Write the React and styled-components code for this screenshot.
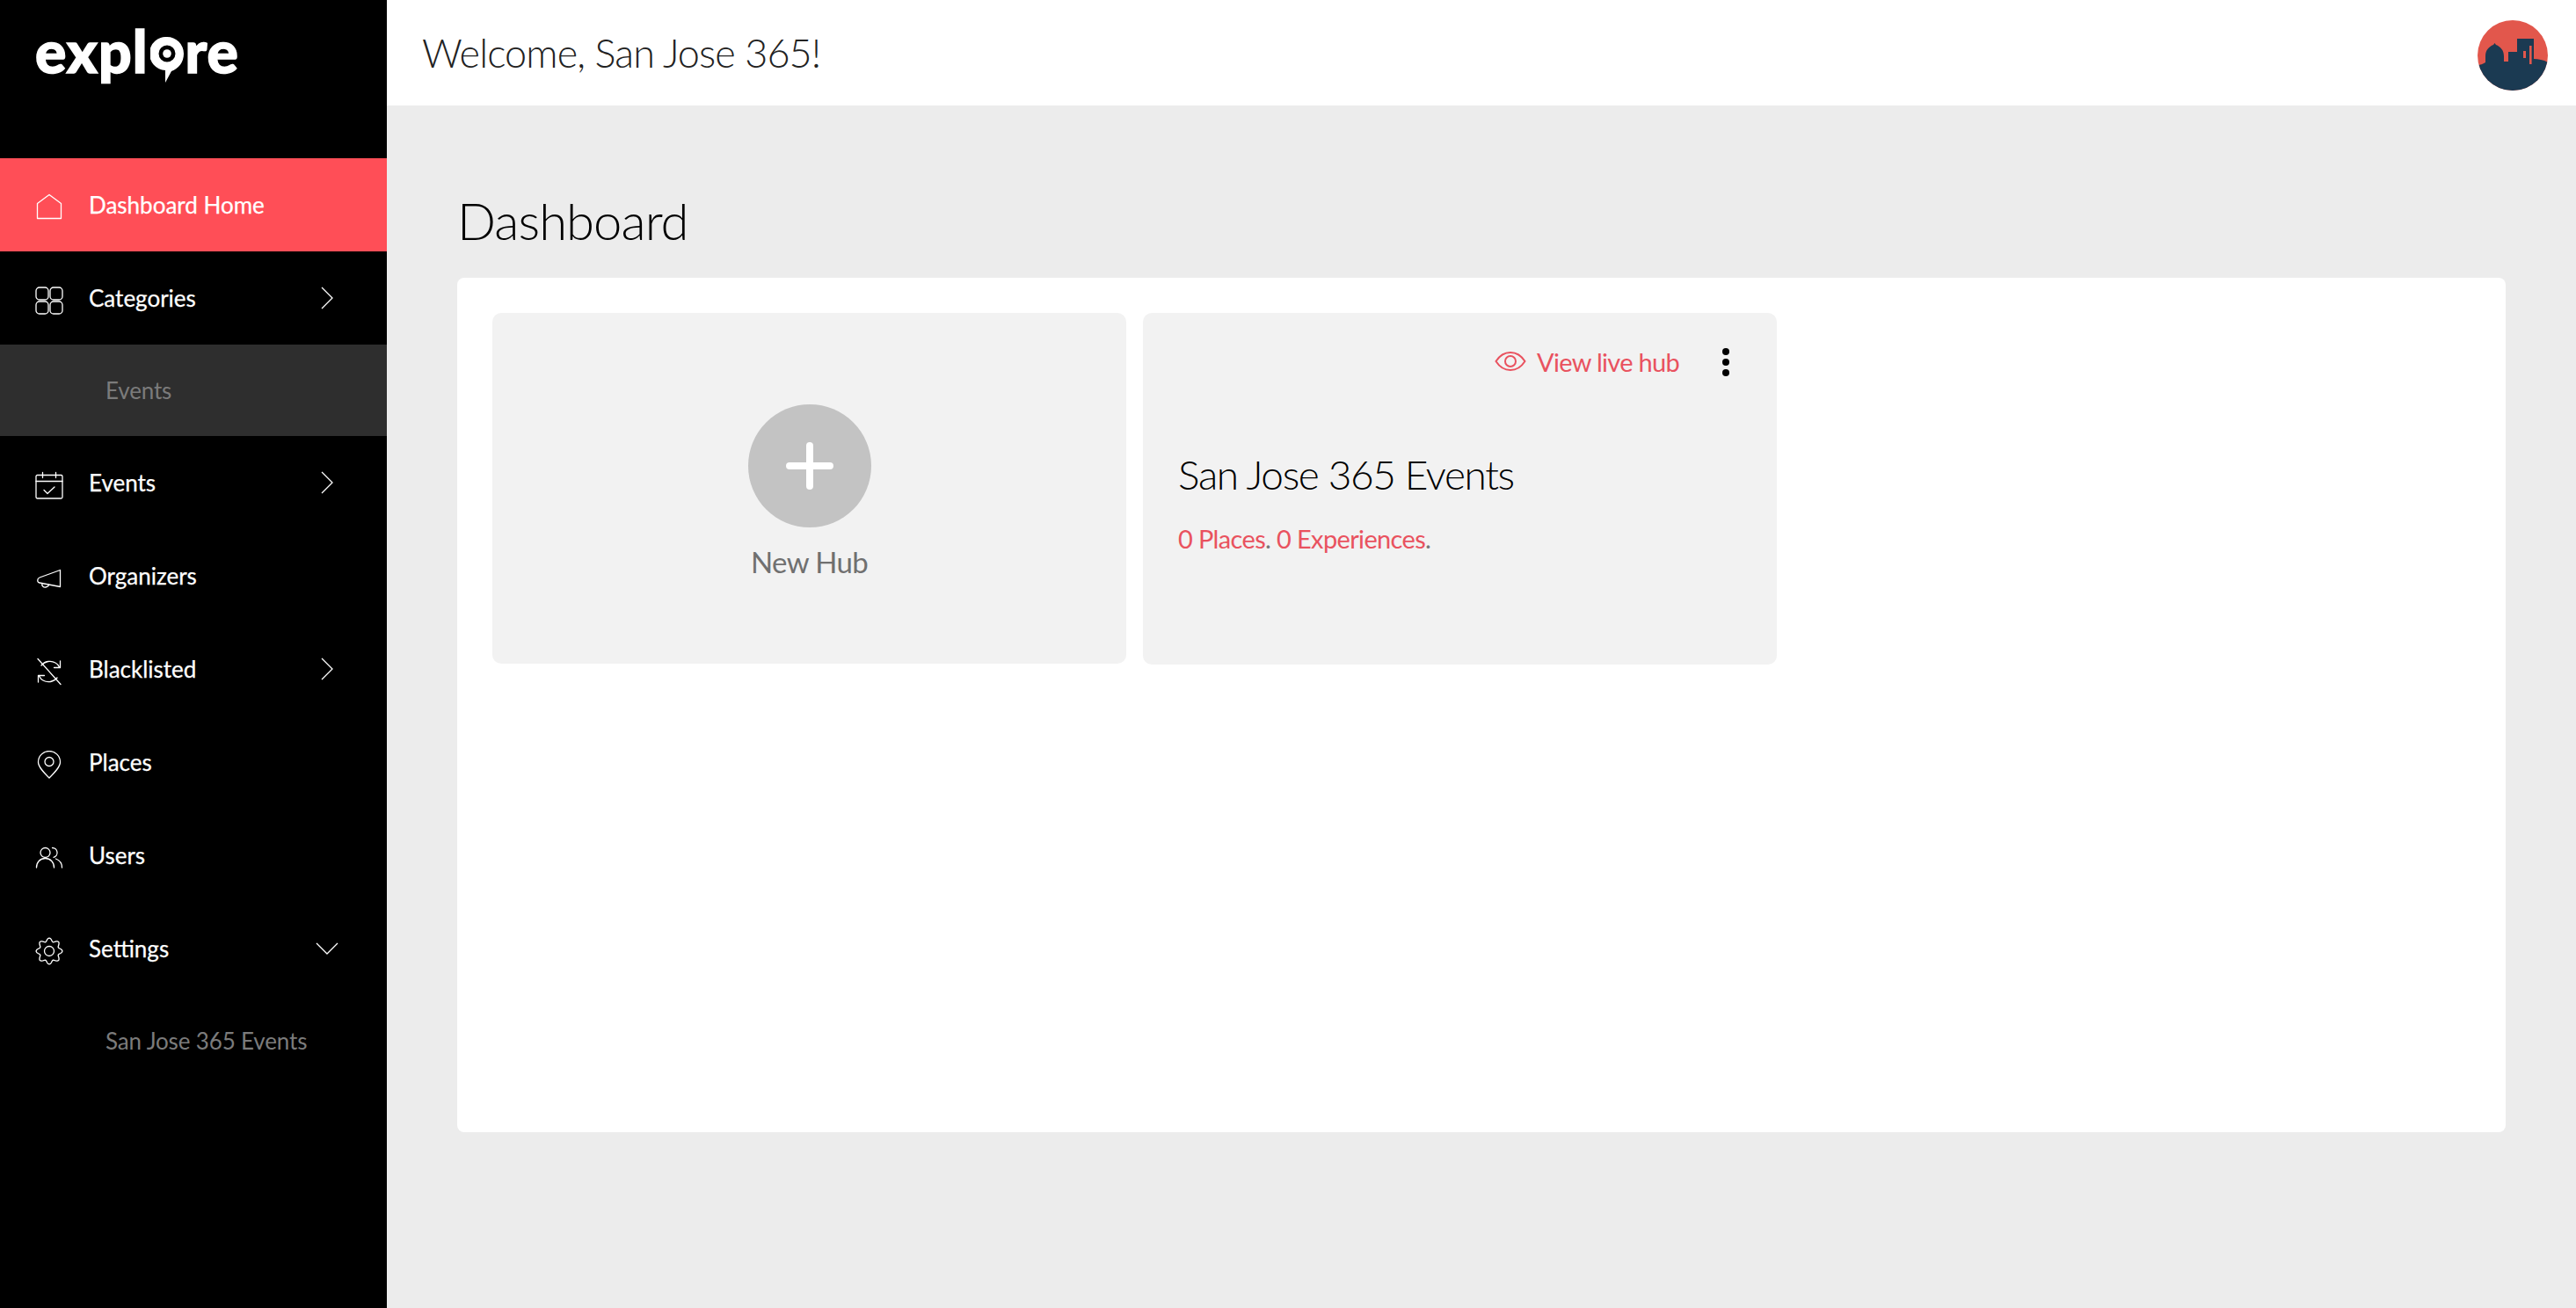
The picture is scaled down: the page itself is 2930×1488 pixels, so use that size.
import React from "react";
import styled, { createGlobalStyle } from "styled-components";

const Global = createGlobalStyle`
  html, body { margin: 0; padding: 0; height: 100%; }
  body { font-family: Lato, "Liberation Sans", sans-serif; background: #ececec; overflow: hidden; }
  #root { height: 100%; }
  * { box-sizing: border-box; }
`;

const Shell = styled.div`display: flex; height: 1488px; width: 2930px;`;
const Sidebar = styled.aside`width: 440px; flex: none; background: #000; display: flex; flex-direction: column;`;
const LogoBar = styled.div`height: 180px; padding: 19px 0 0 40px; flex: none;`;
const Logo = styled.div`
  display: flex; align-items: baseline; color: #fff; font-family: Lato, sans-serif; font-weight: 900;
  font-size: 66px; line-height: 78px; letter-spacing: 1px;
  -webkit-text-stroke: 1.5px #fff;
`;
const LogoPin = styled.svg`width: 38px; height: 52px; margin: 23px 1px 0 3px; align-self: flex-start; flex: none;`;
const Row = styled.div`
  height: 106px; flex: none; display: flex; align-items: center; padding: 0 0 0 40px;
  background: ${p => (p.$active ? "#ff4e57" : "transparent")}; color: #fff;
  font-size: 26px; -webkit-text-stroke: 0.25px #fff;
`;
const RowIcon = styled.svg`width: 32px; height: 32px; flex: none; margin-right: 29px; fill: none; stroke: #fff; stroke-width: 1.3; stroke-linecap: round; stroke-linejoin: round; position: relative; top: 3px;`;
const RowLabel = styled.span`flex: 1;`;
const Chevron = styled.svg`width: 28px; height: 28px; flex: none; margin-right: 54px; fill: none; stroke: #fff; stroke-width: 1.3;`;
const SubRow = styled.div`
  height: 104px; flex: none; display: flex; align-items: center; padding-left: 120px;
  background: ${p => (p.$shade ? "#2e2e2e" : "transparent")}; color: #7b7b7b; font-size: 26px; letter-spacing: -0.15px;
`;

const Main = styled.main`flex: 1; display: flex; flex-direction: column; min-width: 0;`;
const TopBar = styled.header`
  height: 120px; flex: none; background: #fff; display: flex; align-items: center; justify-content: space-between;
  padding: 0 32px 0 40px;
`;
const Welcome = styled.h2`margin: 0; font-weight: 300; font-size: 45px; letter-spacing: -0.9px; color: #222;`;
const Avatar = styled.svg`width: 80px; height: 80px; display: block; position: relative; top: 3px;`;
const Content = styled.div`flex: 1; padding: 0 80px; display: flex; flex-direction: column;`;
const PageTitle = styled.h1`margin: 0; height: 196px; padding-top: 93px; font-weight: 300; font-size: 58px; line-height: 76px; letter-spacing: -0.95px; color: #000;`;
const Panel = styled.section`height: 972px; width: 2330px; background: #fff; border-radius: 8px; padding: 40px; display: flex; gap: 19px; align-items: flex-start;`;
const Card = styled.div`width: 721px; height: ${p => p.$h}px; background: #f2f2f2; border-radius: 10px; flex: none;`;
const NewCard = styled(Card)`display: flex; flex-direction: column; align-items: center; padding-top: 104px;`;
const AddCircle = styled.div`width: 140px; height: 140px; border-radius: 50%; background: #c3c3c3; display: flex; align-items: center; justify-content: center;`;
const PlusIcon = styled.svg`width: 54px; height: 54px; stroke: #fff; stroke-width: 8; stroke-linecap: round;`;
const NewLabel = styled.div`margin-top: 17px; font-size: 33px; line-height: 44px; letter-spacing: -0.6px; color: #707070;`;
const HubCard = styled(Card)`padding: 0 40px; display: flex; flex-direction: column;`;
const HubTop = styled.div`height: 112px; flex: none; display: flex; align-items: center; justify-content: flex-end;`;
const LiveLink = styled.div`display: flex; align-items: center; gap: 12px; color: #e9525f; font-size: 29px; letter-spacing: -0.7px; position: relative; top: -1px;`;
const EyeIcon = styled.svg`width: 36px; height: 24px; fill: none; stroke: #e9525f; stroke-width: 2;`;
const Dots = styled.svg`width: 12px; height: 32px; margin: 0 12px 0 47px; fill: #000;`;
const HubTitle = styled.h3`margin: 44px 0 0; font-weight: 300; font-size: 46px; line-height: 56px; letter-spacing: -1.35px; color: #000;`;
const HubMeta = styled.div`margin-top: 27px; font-size: 29px; line-height: 36px; letter-spacing: -0.65px; color: #e9525f;`;
const Dot = styled.span`color: #777;`;

const gearPoints = Array.from({ length: 128 }, (_, i) => {
  const t = (i / 128) * Math.PI * 2;
  const r = 13 + 1.9 * Math.cos(8 * t);
  return `${(16 + r * Math.sin(t)).toFixed(2)},${(16 - r * Math.cos(t)).toFixed(2)}`;
}).join(" ");

const I = {
  home: <path d="M2.500 28.500V11.500L16 1.500l13.500 10v17z" />,
  grid: <g><rect x="1" y="1" width="14" height="14" rx="3.800" /><rect x="17" y="1" width="14" height="14" rx="3.800" /><rect x="1" y="17" width="14" height="14" rx="3.800" /><rect x="17" y="17" width="14" height="14" rx="3.800" /></g>,
  cal: <g><rect x="1" y="4.500" width="30" height="26.500" rx="1.500" /><path d="M1 11.500h30M8.500 1.500v6M23.500 1.500v6M10 21.500l4 4 8-7.500" /></g>,
  mega: <g><path d="M28.500 6.500v19L5 21c-3-.5-3-5 0-6z" /><path d="M8 21.500c-1 3 1.500 5 4 4.500s3.500-2 3.500-3" /></g>,
  black: <g><path d="M3 1.500l26 29" /><path d="M7 9c4-5 11-6 16-3 2 1 3.500 3 4.500 5M28.500 4v7.500h-7M25 23c-4 5-11 6-16 3-2-1-3.500-3-4.500-5M3.500 28v-7.500h7" /></g>,
  pin: <g><path d="M16 31C10 25 3.500 18.500 3.500 13a12.500 12.500 0 0 1 25 0C28.500 18.500 22 25 16 31z" /><circle cx="16" cy="12.500" r="5" /></g>,
  users: <g><circle cx="11.500" cy="10" r="5.500" /><path d="M1.500 27c0-6 4-10.500 10-10.500S21.500 21 21.500 27" /><path d="M19.500 4.500a5.500 5.500 0 0 1 1.500 10.800M23.500 17c4 1.500 7 5 7 10" /></g>,
  gear: <g><circle cx="16" cy="16" r="5.500" /><polygon points={gearPoints} /></g>,
};

const Right = () => <Chevron viewBox="0 0 28 28"><path d="M8 2l12 12L8 26" /></Chevron>;
const Down = () => <Chevron viewBox="0 0 28 28"><path d="M2 8l12 12L26 8" /></Chevron>;

const NavRow = ({ icon, label, active, chevron }) => (
  <Row $active={active}>
    <RowIcon viewBox="0 0 32 32">{icon}</RowIcon>
    <RowLabel>{label}</RowLabel>
    {chevron}
  </Row>
);

export default function App() {
  return (
    <Shell>
      <Global />
      <Sidebar>
        <LogoBar>
          <Logo>
            <span>expl</span>
            <LogoPin viewBox="0 0 38 52">
              <path fillRule="evenodd" fill="#fff" d="M19 0a19 19 0 0 1 19 19c0 10-6 17-14 20L17 52V38A19 19 0 0 1 19 0zm0 9.500a9.500 9.500 0 1 0 0 19 9.500 9.500 0 0 0 0-19z" />
              <circle cx="19" cy="19" r="4.800" fill="#fff" />
            </LogoPin>
            <span>re</span>
          </Logo>
        </LogoBar>
        <NavRow icon={I.home} label="Dashboard Home" active />
        <NavRow icon={I.grid} label="Categories" chevron={<Right />} />
        <SubRow $shade>Events</SubRow>
        <NavRow icon={I.cal} label="Events" chevron={<Right />} />
        <NavRow icon={I.mega} label="Organizers" />
        <NavRow icon={I.black} label="Blacklisted" chevron={<Right />} />
        <NavRow icon={I.pin} label="Places" />
        <NavRow icon={I.users} label="Users" />
        <NavRow icon={I.gear} label="Settings" chevron={<Down />} />
        <SubRow>San Jose 365 Events</SubRow>
      </Sidebar>
      <Main>
        <TopBar>
          <Welcome>Welcome, San Jose 365!</Welcome>
          <Avatar viewBox="0 0 80 80">
            <defs><clipPath id="av"><circle cx="40" cy="40" r="40" /></clipPath></defs>
            <g clipPath="url(#av)">
              <rect width="80" height="80" fill="#e2574c" />
              <path fill="#1b3a52" d="M0 51c3 0 6-1 9-3v-7c0-7 4-11 9-13l1.500-2 1.500 2c5 2 9 6 9 13v6h5V36h10V21h19v23c5 0 11 1 16 4v32H0z" />
              <rect x="52" y="35" width="3" height="8" fill="#e2574c" />
              <rect x="59" y="29" width="2.600" height="21" fill="#e2574c" />
            </g>
          </Avatar>
        </TopBar>
        <Content>
          <PageTitle>Dashboard</PageTitle>
          <Panel>
            <NewCard $h={399}>
              <AddCircle>
                <PlusIcon viewBox="0 0 54 54"><path d="M27 4v46M4 27h46" /></PlusIcon>
              </AddCircle>
              <NewLabel>New Hub</NewLabel>
            </NewCard>
            <HubCard $h={400}>
              <HubTop>
                <LiveLink>
                  <EyeIcon viewBox="0 0 36 24"><path d="M1.500 12C6 5 11.500 2 18 2s12 3 16.500 10C30 19 24.500 22 18 22S6 19 1.500 12z" /><circle cx="18" cy="12" r="6" /></EyeIcon>
                  View live hub
                </LiveLink>
                <Dots viewBox="0 0 12 32"><circle cx="6" cy="4" r="4" /><circle cx="6" cy="16" r="4" /><circle cx="6" cy="28" r="4" /></Dots>
              </HubTop>
              <HubTitle>San Jose 365 Events</HubTitle>
              <HubMeta>0 Places<Dot>.</Dot> 0 Experiences<Dot>.</Dot></HubMeta>
            </HubCard>
          </Panel>
        </Content>
      </Main>
    </Shell>
  );
}
